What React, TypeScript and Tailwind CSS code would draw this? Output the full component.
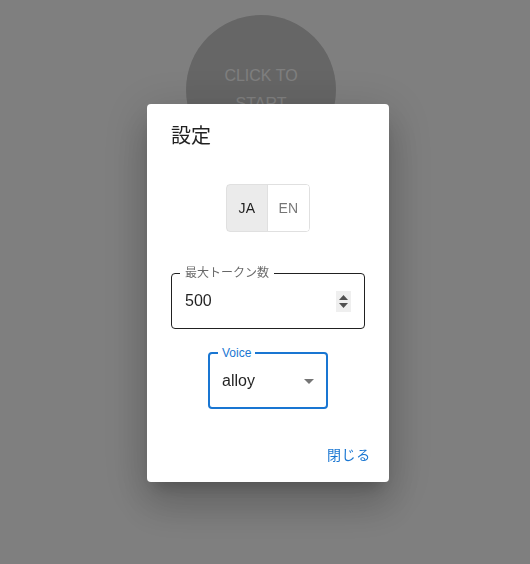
import { useState } from "react";

const FONT = "font-['Liberation_Sans','Noto_Sans_CJK_JP',sans-serif]";

function LangToggle() {
  const [lang, setLang] = useState("JA");
  const langs = [
    { code: "JA", width: "w-[40px]" },
    { code: "EN", width: "w-[42px]" },
  ];
  return (
    <div className="flex justify-center">
      <div className="flex h-12 rounded border border-black/[0.12] overflow-hidden">
        {langs.map((l, i) => (
          <button
            key={l.code}
            onClick={() => setLang(l.code)}
            className={`${l.width} text-sm font-normal tracking-[0.02em] leading-none ${
              i > 0 ? "border-l border-black/[0.12]" : ""
            } ${
              lang === l.code
                ? "bg-black/[0.08] text-black/[0.87]"
                : "bg-white text-black/[0.54]"
            }`}
          >
            {l.code}
          </button>
        ))}
      </div>
    </div>
  );
}

function TokenField() {
  return (
    <div className="relative h-14 rounded border border-black/[0.87] flex items-center pl-[13px] pr-[13px]">
      <span className="absolute -top-[8px] left-[8px] px-[5px] bg-white text-xs leading-[14px] text-black/60">
        最大トークン数
      </span>
      <span className="flex-1 text-base text-black/[0.87]">500</span>
      <div className="w-[15px] h-[21px] bg-[#efefef] flex flex-col items-center justify-center gap-[3px]">
        <svg width="9" height="5" viewBox="0 0 9 5">
          <path d="M0 5L4.5 0L9 5Z" fill="#505050" />
        </svg>
        <svg width="9" height="5" viewBox="0 0 9 5">
          <path d="M0 0L4.5 5L9 0Z" fill="#505050" />
        </svg>
      </div>
    </div>
  );
}

function VoiceSelect() {
  return (
    <div className="flex justify-center">
      <div className="relative w-[120px] h-[57px] rounded border-2 border-[#1976d2] flex items-center pl-[12px]">
        <span className="absolute -top-[8px] left-[8px] px-[4px] bg-white text-xs leading-[14px] text-[#1976d2]">
          Voice
        </span>
        <span className="flex-1 text-base text-black/[0.87]">alloy</span>
        <svg width="24" height="24" viewBox="0 0 24 24" className="mr-[5px]">
          <path d="M7 10l5 5 5-5z" fill="rgba(0,0,0,0.54)" />
        </svg>
      </div>
    </div>
  );
}

export default function App() {
  return (
    <div className={`${FONT} min-h-screen bg-white`}>
      <div className="flex justify-center pt-[15px] pr-2">
        <button className="w-[150px] h-[150px] rounded-full bg-[#cccccc] text-white text-base font-normal leading-[28px] px-8">
          CLICK TO START
        </button>
      </div>

      <div className="fixed inset-0 bg-black/50" />

      <div className="fixed inset-0 flex items-start justify-center pt-[104px] pl-[6px]">
        <div className="w-[242px] bg-white rounded shadow-[0px_11px_15px_-7px_rgba(0,0,0,0.2),0px_24px_38px_3px_rgba(0,0,0,0.14),0px_9px_46px_8px_rgba(0,0,0,0.12)] flex flex-col">
          <h2 className="px-6 py-4 text-xl leading-8 font-normal text-black/[0.87]">
            設定
          </h2>
          <div className="px-6 pt-4 pb-5 flex flex-col">
            <LangToggle />
            <div className="mt-[41px]">
              <TokenField />
            </div>
            <div className="mt-[23px]">
              <VoiceSelect />
            </div>
          </div>
          <div className="p-2 flex justify-end">
            <button className="pl-2 pr-[10px] h-[36.5px] text-sm font-normal tracking-[0.05em] text-[#1976d2] rounded">
              閉じる
            </button>
          </div>
        </div>
      </div>
    </div>
  );
}
